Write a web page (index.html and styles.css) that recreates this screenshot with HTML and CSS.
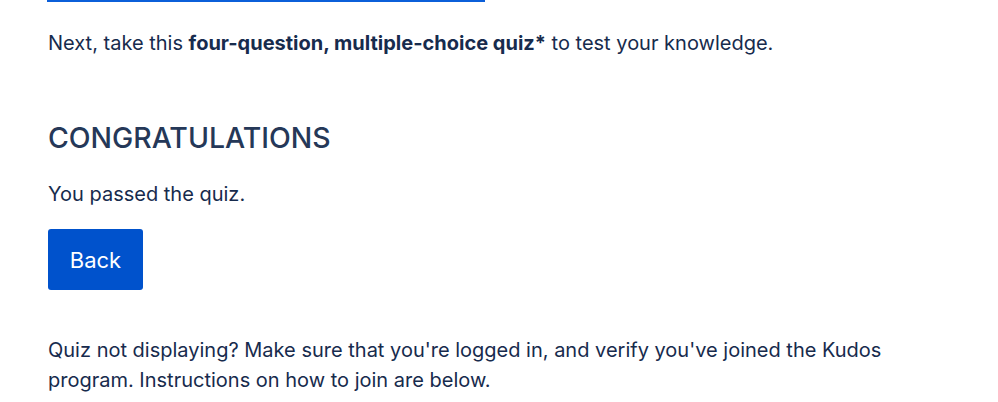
FILE: index.html
```html
<!DOCTYPE html>
<html lang="en">
<head>
  <meta charset="UTF-8" />
  <title>Kudos Quiz</title>
  <link rel="stylesheet" href="styles.css">
</head>
<body>
  <main class="content">
    <div class="tab-rule"></div>

    <p class="intro">Next, take this <strong>four-question, multiple-choice quiz*</strong> to test your knowledge.</p>

    <section class="quiz-result">
      <h2>CONGRATULATIONS</h2>
      <p>You passed the quiz.</p>
      <button type="button" class="btn-back">Back</button>
    </section>

    <p class="note">Quiz not displaying? Make sure that you're logged in, and verify you've joined the Kudos program. Instructions on how to join are below.</p>
  </main>
</body>
</html>
```

FILE: styles.css
```css
* {
  box-sizing: border-box;
  margin: 0;
  padding: 0;
}

body {
  background: #fff;
  color: #172b4d;
  font-family: Inter, "Noto Sans", sans-serif;
  font-size: 20px;
  line-height: 30px;
}

.content {
  width: 860px;
  margin-left: 48px;
}

.tab-rule {
  width: 438px;
  height: 2px;
  margin-left: -1px;
  background: #0b5fd9;
}

.intro {
  margin-top: 26px;
}

.intro strong {
  font-weight: 700;
}

.quiz-result {
  margin-top: 64px;
}

.quiz-result h2 {
  font-size: 28.4px;
  font-weight: 500;
  line-height: 32px;
  color: #253858;
}

.quiz-result p {
  margin-top: 25px;
}

.btn-back {
  margin-top: 20px;
  width: 95px;
  height: 61px;
  border: none;
  border-radius: 3px;
  background: #0052cc;
  color: #fff;
  font-family: inherit;
  font-size: 22px;
  cursor: pointer;
}

.note {
  margin-top: 45px;
}
```
